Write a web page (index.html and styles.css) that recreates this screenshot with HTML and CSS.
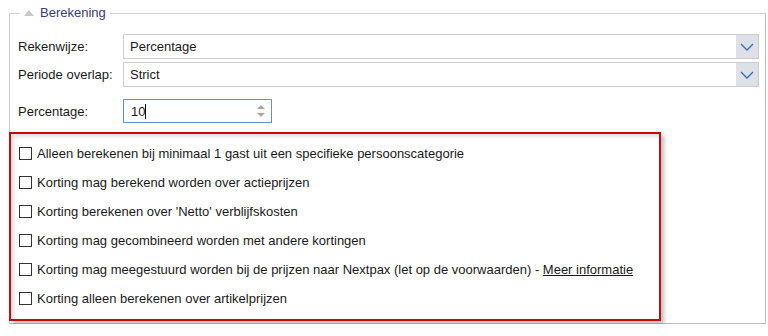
FILE: index.html
```html
<!DOCTYPE html>
<html lang="nl">
<head>
    <meta charset="UTF-8">
    <meta name="viewport" content="width=device-width, initial-scale=1.0">
    <title>Berekening</title>
    <link rel="stylesheet" href="styles.css">
</head>
<body>
<fieldset class="panel">
    <legend><span class="toggle"></span>Berekening</legend>

    <!-- Selects -->
    <div class="field-row">
        <label>Rekenwijze:</label>
        <div class="select">
            <span class="select-value">Percentage</span>
            <span class="select-btn">
                <svg width="14" height="8" viewBox="0 0 14 8"><path d="M1 1 L7 7 L13 1" fill="none" stroke="#2f6fb5" stroke-width="1.3"/></svg>
            </span>
        </div>
    </div>
    <div class="field-row">
        <label>Periode overlap:</label>
        <div class="select">
            <span class="select-value">Strict</span>
            <span class="select-btn">
                <svg width="14" height="8" viewBox="0 0 14 8"><path d="M1 1 L7 7 L13 1" fill="none" stroke="#2f6fb5" stroke-width="1.3"/></svg>
            </span>
        </div>
    </div>

    <div class="field-row spaced">
        <label>Percentage:</label>
        <div class="number-input">
            <span class="number-value">10<span class="caret"></span></span>
            <span class="spinner">
                <svg width="10" height="14" viewBox="0 0 10 14"><path d="M1 5 L5 1 L9 5 Z M1 9 L5 13 L9 9 Z" fill="#a6a6a6"/></svg>
            </span>
        </div>
    </div>

    <!-- Options -->
    <div class="options">
        <div class="option"><span class="check"></span>Alleen berekenen bij minimaal 1 gast uit een specifieke persoonscategorie</div>
        <div class="option"><span class="check"></span>Korting mag berekend worden over actieprijzen</div>
        <div class="option"><span class="check"></span>Korting berekenen over 'Netto' verblijfskosten</div>
        <div class="option"><span class="check"></span>Korting mag gecombineerd worden met andere kortingen</div>
        <div class="option"><span class="check"></span>Korting mag meegestuurd worden bij de prijzen naar Nextpax (let op de voorwaarden) -&nbsp;<a href="#">Meer informatie</a></div>
        <div class="option"><span class="check"></span>Korting alleen berekenen over artikelprijzen</div>
    </div>
</fieldset>
</body>
</html>
```

FILE: styles.css
```css
/* General */
body {
    margin: 0;
    padding: 5px 2px 0 9px;
    background: #fff;
    font-family: "Liberation Sans", Arial, sans-serif;
    font-size: 13px;
    color: #1a1a1a;
}

.panel {
    margin: 0;
    padding: 13px 6px 2px 8px;
    border: 1px solid #cfcfd4;
    border-right-color: #bdbdc8;
    border-bottom-color: #bdbdc8;
    min-width: 0;
}

.panel legend {
    margin-left: 2px;
    padding: 0 4px;
    line-height: 16px;
    color: #3a3a78;
    display: flex;
    align-items: center;
}

.toggle {
    width: 0;
    height: 0;
    border-left: 5px solid transparent;
    border-right: 5px solid transparent;
    border-bottom: 6px solid #c8c8c8;
    margin-right: 6px;
}

/* Form rows */
.field-row {
    display: flex;
    align-items: center;
    margin-bottom: 3px;
}

.field-row.spaced {
    margin-top: 12px;
    margin-bottom: 0;
}

.field-row label {
    width: 105px;
    flex: none;
}

.select {
    flex: 1;
    height: 25px;
    box-sizing: border-box;
    border: 1px solid #cdcdcd;
    display: flex;
    align-items: stretch;
}

.select-value {
    flex: 1;
    padding-left: 6px;
    line-height: 23px;
}

.select-btn {
    width: 22px;
    background: #dde0e6;
    display: flex;
    align-items: center;
    justify-content: center;
}

.number-input {
    width: 149px;
    height: 24px;
    box-sizing: border-box;
    border: 1px solid #5b95cf;
    display: flex;
    align-items: center;
}

.number-value {
    flex: 1;
    padding-left: 7px;
    display: flex;
    align-items: center;
}

.caret {
    display: inline-block;
    width: 1px;
    height: 15px;
    background: #000;
}

.spinner {
    width: 20px;
    display: flex;
    justify-content: center;
}

/* Options box */
.options {
    margin: 9px 0 0 -9px;
    width: 652px;
    box-sizing: border-box;
    border: 2px solid #c8090f;
    padding: 5px 8px 6px;
    box-shadow: 3px 3px 4px rgba(0, 0, 0, 0.25), inset 3px 3px 4px rgba(0, 0, 0, 0.12);
}

.option {
    height: 29px;
    display: flex;
    align-items: center;
}

.check {
    width: 13px;
    height: 13px;
    box-sizing: border-box;
    border: 1px solid #333;
    background: #fff;
    margin-right: 5px;
    flex: none;
}

.option a {
    color: #1a1a1a;
    text-decoration: underline;
}
```
